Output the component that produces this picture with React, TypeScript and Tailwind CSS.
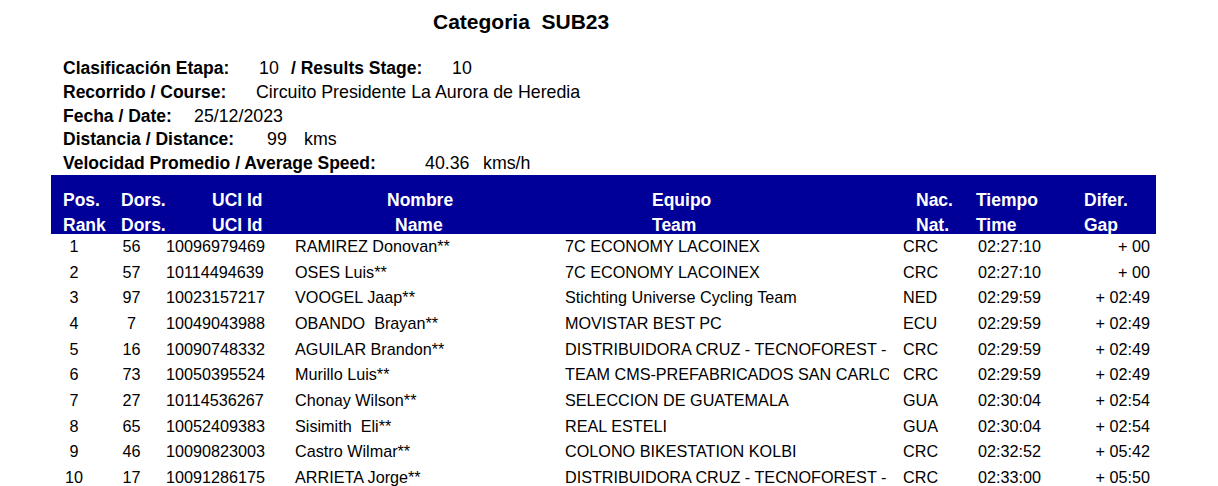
import React from "react";

const rows = [
  ["1", "56", "10096979469", "RAMIREZ Donovan**", "7C ECONOMY LACOINEX", "CRC", "02:27:10", "+ 00"],
  ["2", "57", "10114494639", "OSES Luis**", "7C ECONOMY LACOINEX", "CRC", "02:27:10", "+ 00"],
  ["3", "97", "10023157217", "VOOGEL Jaap**", "Stichting Universe Cycling Team", "NED", "02:29:59", "+ 02:49"],
  ["4", "7", "10049043988", "OBANDO  Brayan**", "MOVISTAR BEST PC", "ECU", "02:29:59", "+ 02:49"],
  ["5", "16", "10090748332", "AGUILAR Brandon**", "DISTRIBUIDORA CRUZ - TECNOFOREST -", "CRC", "02:29:59", "+ 02:49"],
  ["6", "73", "10050395524", "Murillo Luis**", "TEAM CMS-PREFABRICADOS SAN CARLOS", "CRC", "02:29:59", "+ 02:49"],
  ["7", "27", "10114536267", "Chonay Wilson**", "SELECCION DE GUATEMALA", "GUA", "02:30:04", "+ 02:54"],
  ["8", "65", "10052409383", "Sisimith  Eli**", "REAL ESTELI", "GUA", "02:30:04", "+ 02:54"],
  ["9", "46", "10090823003", "Castro Wilmar**", "COLONO BIKESTATION KOLBI", "CRC", "02:32:52", "+ 05:42"],
  ["10", "17", "10091286175", "ARRIETA Jorge**", "DISTRIBUIDORA CRUZ - TECNOFOREST -", "CRC", "02:33:00", "+ 05:50"],
];

export default function App() {
  return (
    <div
      className="w-[1218px] h-[486px] bg-white text-black overflow-hidden"
      style={{ fontFamily: '"Liberation Sans", Arial, sans-serif' }}
    >
      <div className="pt-[9px] pl-[433px] h-[35px] text-[21px] leading-[26px] font-bold whitespace-pre">
        Categoria  SUB23
      </div>
      <div className="mt-[22px] pl-[63px] text-[17.5px] h-[118px]">
        <div className="flex h-[23.75px] leading-[23.75px] whitespace-pre">
          <span className="w-[196px] font-bold">Clasificación Etapa:</span>
          <span className="w-[32px] text-[17.8px]">10</span>
          <span className="w-[161px] font-bold">/ Results Stage:</span>
          <span className="text-[17.8px]">10</span>
        </div>
        <div className="flex h-[23.75px] leading-[23.75px] whitespace-pre">
          <span className="w-[193px] font-bold">Recorrido / Course:</span>
          <span className="text-[17.8px]">Circuito Presidente La Aurora de Heredia</span>
        </div>
        <div className="flex h-[23.75px] leading-[23.75px] whitespace-pre">
          <span className="w-[131px] font-bold">Fecha / Date:</span>
          <span className="text-[17.8px]">25/12/2023</span>
        </div>
        <div className="flex h-[23.75px] leading-[23.75px] whitespace-pre">
          <span className="w-[204px] font-bold">Distancia / Distance:</span>
          <span className="w-[37px] text-[17.8px]">99</span>
          <span className="text-[17.8px]">kms</span>
        </div>
        <div className="flex h-[23.75px] leading-[23.75px] whitespace-pre">
          <span className="w-[362px] font-bold">Velocidad Promedio / Average Speed:</span>
          <span className="w-[58px] text-[17.8px]">40.36</span>
          <span className="text-[17.8px]">kms/h</span>
        </div>
      </div>
      <div className="ml-[51px] w-[1105px] h-[59px] bg-[#000099] text-white font-bold text-[17.5px] pt-[13px]">
        <div className="flex h-[25px] leading-[25px] whitespace-pre">
          <span className="w-[70px] pl-[12px]">Pos.</span>
          <span className="w-[91px]">Dors.</span>
          <span className="w-[175px]">UCI Id</span>
          <span className="w-[265px]">Nombre</span>
          <span className="w-[264px]">Equipo</span>
          <span className="w-[60px]">Nac.</span>
          <span className="w-[108px]">Tiempo</span>
          <span>Difer.</span>
        </div>
        <div className="flex h-[21px] leading-[25px] whitespace-pre">
          <span className="w-[70px] pl-[12px]">Rank</span>
          <span className="w-[91px]">Dors.</span>
          <span className="w-[175px]">UCI Id</span>
          <span className="w-[265px] pl-[8px]">Name</span>
          <span className="w-[264px]">Team</span>
          <span className="w-[60px]">Nat.</span>
          <span className="w-[108px]">Time</span>
          <span>Gap</span>
        </div>
      </div>
      <div className="ml-[51px] text-[16.2px]">
        {rows.map((r) => (
          <div key={r[0]} className="flex h-[25.67px] leading-[25.67px] whitespace-pre">
            <span className="w-[46px] text-center">{r[0]}</span>
            <span className="w-[69px] text-center">{r[1]}</span>
            <span className="w-[129px]">{r[2]}</span>
            <span className="w-[270px]">{r[3]}</span>
            <span className="w-[324px] overflow-hidden">{r[4]}</span>
            <span className="w-[89px] pl-[14px]">{r[5]}</span>
            <span className="w-[112px]">{r[6]}</span>
            <span className="w-[60px] text-right">{r[7]}</span>
          </div>
        ))}
      </div>
    </div>
  );
}
